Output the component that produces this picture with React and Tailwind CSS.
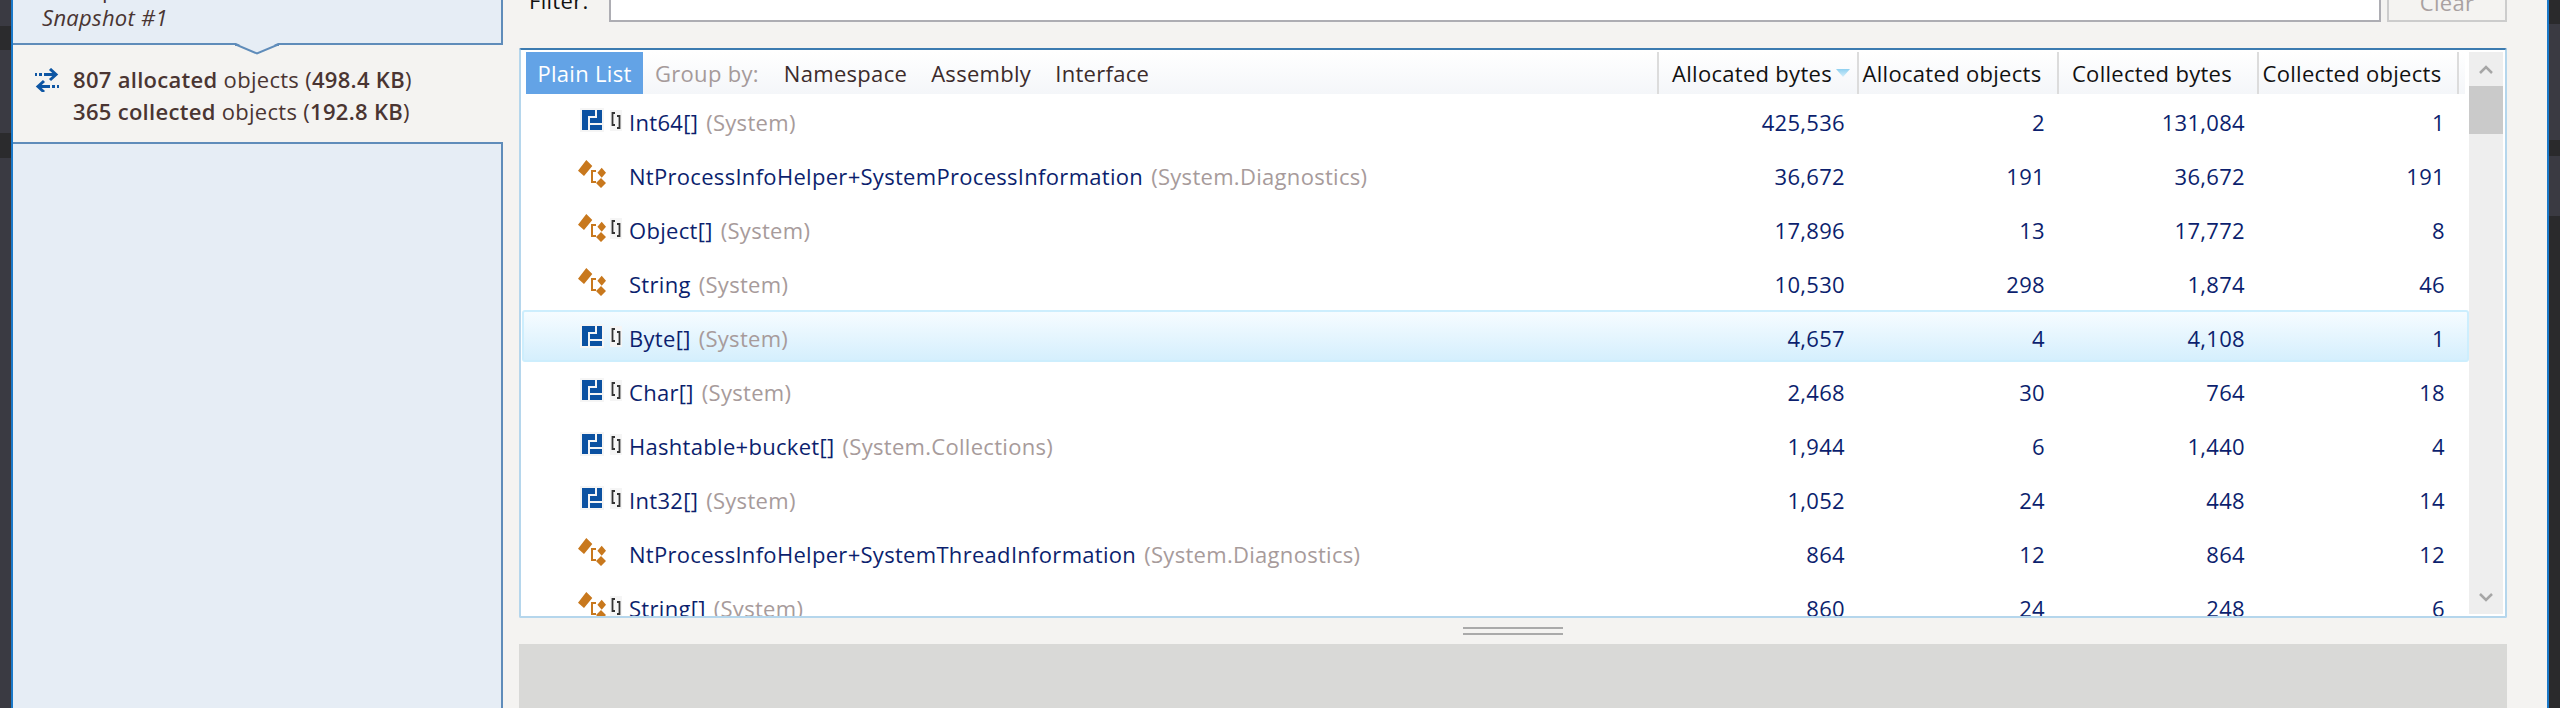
const rows = [
  { name: "Int64[]", ns: "System", kind: "array", bracket: true, vals: ["425,536", "2", "131,084", "1"] },
  { name: "NtProcessInfoHelper+SystemProcessInformation", ns: "System.Diagnostics", kind: "type", vals: ["36,672", "191", "36,672", "191"] },
  { name: "Object[]", ns: "System", kind: "type", bracket: true, vals: ["17,896", "13", "17,772", "8"] },
  { name: "String", ns: "System", kind: "type", vals: ["10,530", "298", "1,874", "46"] },
  { name: "Byte[]", ns: "System", kind: "array", bracket: true, active: true, vals: ["4,657", "4", "4,108", "1"] },
  { name: "Char[]", ns: "System", kind: "array", bracket: true, vals: ["2,468", "30", "764", "18"] },
  { name: "Hashtable+bucket[]", ns: "System.Collections", kind: "array", bracket: true, vals: ["1,944", "6", "1,440", "4"] },
  { name: "Int32[]", ns: "System", kind: "array", bracket: true, vals: ["1,052", "24", "448", "14"] },
  { name: "NtProcessInfoHelper+SystemThreadInformation", ns: "System.Diagnostics", kind: "type", vals: ["864", "12", "864", "12"] },
  { name: "String[]", ns: "System", kind: "type", bracket: true, vals: ["860", "24", "248", "6"] },
];

const headers = ["Allocated bytes", "Allocated objects", "Collected bytes", "Collected objects"];

function ArrayIcon() {
  return (
    <svg width="24" height="24" viewBox="-2 -2 24 24" className="bg-[#f5f5f5]">
      <path fill="#0b51a1" d="M0 0H13V6H6V20H0Z M15 0H20V13H8V8H15Z M8 15H20V20H8Z" />
    </svg>
  );
}

function TypeIcon() {
  return (
    <svg width="28" height="28" viewBox="0 0 28 28">
      <path fill="#c8781d" d="M0 10.7L8.3 0L14.3 6L6 16Z M23.7 7.7L28 12.7L23.7 17.7L19.4 12.7Z M23 18L28 23L23 28L18 23Z" />
      <path fill="none" stroke="#c8781d" strokeWidth="2" d="M18 11H14V22H18" />
    </svg>
  );
}

function BracketIcon() {
  return (
    <svg width="12" height="21" viewBox="-1.5 -2 12 21" className="bg-[#f5f5f5] shrink-0">
      <path fill="none" stroke="#333" strokeWidth="1.8" d="M3.5 1H1V13H3.5 M5.5 4H8V16H5.5" />
    </svg>
  );
}

function SwapIcon() {
  return (
    <svg width="24" height="24" viewBox="0 0 24 24" className="shrink-0">
      <g fill="#0e56a4">
        <rect x="0" y="5" width="2" height="3" />
        <rect x="4" y="5" width="3" height="3" />
        <rect x="9" y="5" width="11" height="3" />
        <rect x="4" y="17" width="11" height="3" />
        <rect x="17" y="17" width="3" height="3" />
        <rect x="22" y="17" width="2" height="3" />
      </g>
      <path fill="none" stroke="#0e56a4" strokeWidth="3" d="M15 1L21 6.5L15 12 M9 13L3 18.5L9 24" />
    </svg>
  );
}

function SortArrow() {
  return (
    <svg width="14" height="8" viewBox="0 0 14 8" className="absolute right-[7px] top-[17px]">
      <defs>
        <linearGradient id="sortFill" x1="0" y1="0" x2="0" y2="1">
          <stop offset="0" stopColor="#8fd0f0" />
          <stop offset="1" stopColor="#d6effa" />
        </linearGradient>
      </defs>
      <path fill="url(#sortFill)" d="M0 0H14L7 8Z" />
    </svg>
  );
}

function Row({ row }) {
  return (
    <div className={"flex items-center h-[54px] shrink-0 " + (row.active ? "relative" : "")}>
      {row.active && (
        <div className="absolute left-[1px] right-0 top-0 h-[52px] rounded-[3px] border-2 border-[#cdeefd] bg-gradient-to-b from-[#f6fcff] to-[#d5effd]" />
      )}
      <div className="relative flex items-center flex-1 min-w-0 pl-[56px] pt-[2px]">
        <div className="w-[30px] flex justify-center shrink-0 -mt-[4px]">
          {row.kind === "array" ? <ArrayIcon /> : <TypeIcon />}
        </div>
        <div className="w-[12px] ml-[3px] mr-[7px] shrink-0 -mt-[4px]">
          {row.bracket && <BracketIcon />}
        </div>
        <span className="text-[#0c1f6e] whitespace-nowrap">{row.name}</span>
        <span className="text-[#a79b9b] whitespace-nowrap ml-[8px]">({row.ns})</span>
      </div>
      {row.vals.map((v, i) => (
        <div key={i} className="relative w-[200px] text-right text-[#0c1f6e] pr-[12px] pt-[2px]">
          {v}
        </div>
      ))}
      <div className="w-[12px]" />
    </div>
  );
}

export default function App() {
  return (
    <div className="flex h-[708px] overflow-hidden bg-[#f4f3f1] text-[22px] leading-[28px] tracking-[0.3px] font-['Open_Sans',sans-serif]">
      <div className="w-[11px] shrink-0 flex flex-col bg-[#3a3a42]">
        <div className="h-[26px]" />
        <div className="h-[24px] bg-[#2b2b2d]" />
        <div className="h-[83px]" />
        <div className="h-[25px] bg-[#2b2b2d]" />
      </div>
      <div className="w-[2px] shrink-0 bg-[#1a78c8]" />

      {/* snapshot list */}
      <aside className="w-[490px] shrink-0 flex flex-col bg-[#e6edf5] border-r-2 border-[#5f8cba] text-[#4a3532]">
        <div className="h-[43px] shrink-0 pl-[29px] overflow-hidden">
          <div className="-mt-[25px] pl-[60px]">p</div>
          <div className="italic">Snapshot #1</div>
        </div>
        <div className="relative h-[101px] shrink-0 -mr-[2px] bg-[#f4f3f1] border-y-2 border-[#5f8cba] flex">
          <svg width="44" height="12" viewBox="0 0 44 12" className="absolute left-[222px] -top-[2px]">
            <path d="M1 0L22 10L43 0H1Z" fill="#e6edf5" />
            <path d="M0 2H2L22 10.5L42 2H44" fill="none" stroke="#5f8cba" strokeWidth="2" />
          </svg>
          <div className="pl-[22px] pt-[23px] flex gap-[14px] items-start">
            <SwapIcon />
            <div className="-mt-[5px] leading-[32px]">
              <div><span className="font-semibold">807 allocated</span> objects (<span className="font-semibold">498.4 KB</span>)</div>
              <div><span className="font-semibold">365 collected</span> objects (<span className="font-semibold">192.8 KB</span>)</div>
            </div>
          </div>
        </div>
      </aside>

      {/* main area */}
      <main className="flex-1 min-w-0 flex flex-col pl-[16px] pr-[40px]">
        <div className="h-[22px] shrink-0 flex items-end overflow-hidden">
          <div className="w-[90px] shrink-0 pl-[10px] h-[36px] text-[#111]">Filter:</div>
          <div className="flex-1 h-[50px] bg-white border-2 border-[#adadb3]" />
          <div className="w-[120px] shrink-0 ml-[6px] h-[50px] border-2 border-[#cccccc] flex items-center justify-center pt-[10px] text-[#a9a1a1]">Clear</div>
        </div>

        <section className="mt-[26px] h-[570px] shrink-0 flex bg-white border-2 border-[#b5d6ec] border-t-[#3c7bb0] rounded-[2px]">
          <div className="flex-1 min-w-0 flex flex-col overflow-hidden pt-[2px]">
            <div className="h-[42px] shrink-0 flex mr-[4px] ml-[5px] bg-gradient-to-b from-white to-[#f4f6f9]">
              <div className="w-[117px] bg-[#63a3e6] text-white flex items-center justify-center">Plain List</div>
              <div className="flex-1 min-w-0 flex items-center pl-[12px] text-[#3c2b2b]">
                <span className="text-[#a59a9a] mr-[25px]">Group by:</span>
                <span className="mr-[24px]">Namespace</span>
                <span className="mr-[24px]">Assembly</span>
                <span>Interface</span>
              </div>
              {headers.map((h, i) => (
                <div key={h} className="relative w-[200px] flex items-center justify-center pr-[12px] border-l-2 border-[#dcdcdc] text-[#111] whitespace-nowrap">
                  {h}
                  {i === 0 && <SortArrow />}
                </div>
              ))}
              <div className="w-[8px] border-l-2 border-[#dcdcdc]" />
            </div>
            <div className="flex-1 min-h-0 flex flex-col">
              {rows.map((row) => <Row key={row.name} row={row} />)}
            </div>
          </div>
          <div className="w-[34px] shrink-0 mt-[2px] mb-[2px] mr-[2px] bg-[#eeeeee] flex flex-col items-stretch">
            <div className="h-[34px] flex items-center justify-center">
              <svg width="14" height="9" viewBox="0 0 14 9"><path d="M1 8L7 2L13 8" fill="none" stroke="#a6a6a6" strokeWidth="2.5" /></svg>
            </div>
            <div className="h-[48px] bg-[#cacaca]" />
            <div className="flex-1" />
            <div className="h-[34px] flex items-center justify-center">
              <svg width="14" height="9" viewBox="0 0 14 9"><path d="M1 1L7 7L13 1" fill="none" stroke="#a6a6a6" strokeWidth="2.5" /></svg>
            </div>
          </div>
        </section>

        <div className="h-[26px] shrink-0 flex flex-col items-center pt-[9px] gap-[4px]">
          <div className="w-[100px] h-[2px] bg-[#aaaaaa]" />
          <div className="w-[100px] h-[2px] bg-[#aaaaaa]" />
        </div>
        <div className="flex-1 bg-[#d9d9d7]" />
      </main>

      <div className="w-[2px] shrink-0 bg-[#1a78c8]" />
      <div className="w-[11px] shrink-0 flex flex-col bg-[#2a2a2c]">
        <div className="h-[24px]" />
        <div className="h-[116px] bg-[#3a3a42]" />
        <div className="h-[16px]" />
        <div className="h-[60px] bg-[#3a3a42]" />
      </div>
    </div>
  );
}
